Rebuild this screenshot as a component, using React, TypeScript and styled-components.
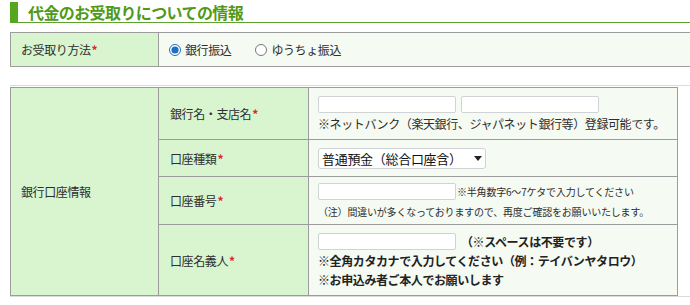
import styled, { createGlobalStyle } from 'styled-components';

const GlobalStyle = createGlobalStyle`
  html, body {
    margin: 0;
    padding: 0;
    background: #fff;
  }
  body {
    font-family: "Noto Sans CJK JP", "Noto Sans", sans-serif;
    color: #333;
  }
`;

const Page = styled.div`
  width: 690px;
  height: 305px;
  overflow: hidden;
  padding: 2px 0 0 10px;
  box-sizing: border-box;
`;

const Heading = styled.h2`
  margin: 0;
  height: 20px;
  border-left: 8px solid #56a61e;
  border-bottom: 1px solid #5ca22c;
  padding-left: 10px;
  display: flex;
  align-items: center;
  font-size: 16px;
  font-weight: bold;
  color: #4f9a18;
  letter-spacing: -0.6px;
  width: 700px;
`;

const Table = styled.table`
  border-collapse: collapse;
  table-layout: fixed;
`;

const MethodTable = styled(Table)`
  margin-top: 9px;
  width: 700px;
`;

const BankWrap = styled.div`
  margin-top: 18px;
  border-top: 1px solid #dcdcdc;
  border-bottom: 1px solid #dcdcdc;
  padding: 1px 0 0;
  width: 700px;
`;

const BankTable = styled(Table)`
  width: 668px;
`;

const Label = styled.td<{ $w?: number; $pl?: number }>`
  width: ${p => p.$w ?? 148}px;
  background: #d8f5cf;
  border: 1px solid #9c9c9c;
  padding: 0 10px 0 ${p => p.$pl ?? 10}px;
  font-size: 12px;
  letter-spacing: -0.4px;
  color: #2e2e2e;
  vertical-align: middle;
  box-sizing: border-box;
`;

const Value = styled.td<{ $h: number }>`
  height: ${p => p.$h}px;
  background: #f5faf2;
  border: 1px solid #9c9c9c;
  padding: 0 9px;
  vertical-align: middle;
  font-size: 12px;
  letter-spacing: -0.4px;
  color: #2e2e2e;
  box-sizing: border-box;
`;

const Req = styled.span`
  color: #e0222e;
  font-size: 12px;
  font-weight: bold;
  margin-left: 1px;
`;

const RadioGroup = styled.div`
  display: flex;
  align-items: center;
  padding-left: 1px;
`;

const RadioLabel = styled.label`
  display: flex;
  align-items: center;
  gap: 4px;
  margin-right: 24px;
`;

const Radio = styled.input`
  margin: 0;
  width: 12px;
  height: 12px;
  accent-color: #1f6fc0;
`;

const Line = styled.div<{ $mt?: number; $gap?: number }>`
  display: flex;
  align-items: center;
  gap: ${p => p.$gap ?? 5}px;
  margin-top: ${p => p.$mt ?? 0}px;
  line-height: 19px;
`;

const TextInput = styled.input`
  width: 138px;
  height: 17px;
  box-sizing: border-box;
  border: 1px solid #cfd3d7;
  border-radius: 2px;
  background: #fff;
  margin: 0;
  padding: 0 3px;
`;

const SelectBox = styled.div`
  position: relative;
  width: 168px;
  height: 21px;
`;

const Select = styled.select`
  appearance: none;
  width: 100%;
  height: 100%;
  border: 1px solid #cfd3d7;
  border-radius: 3px;
  background: #fff;
  font-family: inherit;
  font-size: 13px;
  color: #111;
  padding: 0 3px;
  margin: 0;
  letter-spacing: -0.3px;
`;

const Arrow = styled.span`
  position: absolute;
  right: 4px;
  top: 8px;
  width: 0;
  height: 0;
  border-left: 4px solid transparent;
  border-right: 4px solid transparent;
  border-top: 5px solid #222;
  pointer-events: none;
`;

const Small = styled.span`
  font-size: 10px;
  letter-spacing: -0.2px;
`;

const SmallLine = styled.div`
  font-size: 10px;
  line-height: 16px;
  letter-spacing: -0.2px;
  margin-top: 3px;
`;

const Note = styled.div`
  line-height: 18px;
  margin-top: 2px;
`;

const Strong = styled.span`
  font-weight: bold;
  color: #222;
`;

const StrongLine = styled.div`
  font-weight: bold;
  color: #222;
  line-height: 19px;
`;

const App = () => {
  return (
    <Page>
      <GlobalStyle />
      <Heading>代金のお受取りについての情報</Heading>

      <MethodTable>
        <tbody>
          <tr>
            <Label>お受取り方法<Req>*</Req></Label>
            <Value $h={34}>
              <RadioGroup>
                <RadioLabel>
                  <Radio type="radio" name="method" defaultChecked />
                  銀行振込
                </RadioLabel>
                <RadioLabel>
                  <Radio type="radio" name="method" />
                  ゆうちょ振込
                </RadioLabel>
              </RadioGroup>
            </Value>
          </tr>
        </tbody>
      </MethodTable>

      <BankWrap>
        <BankTable>
          <tbody>
            <tr>
              <Label rowSpan={4}>銀行口座情報</Label>
              <Label $w={150} $pl={11}>銀行名・支店名<Req>*</Req></Label>
              <Value $h={52}>
                <Line $mt={2}>
                  <TextInput />
                  <TextInput />
                </Line>
                <Note>※ネットバンク（楽天銀行、ジャパネット銀行等）登録可能です。</Note>
              </Value>
            </tr>
            <tr>
              <Label $w={150} $pl={11}>口座種類<Req>*</Req></Label>
              <Value $h={37}>
                <SelectBox>
                  <Select defaultValue="futsu">
                    <option value="futsu">普通預金（総合口座含）</option>
                    <option value="toza">当座預金</option>
                  </Select>
                  <Arrow />
                </SelectBox>
              </Value>
            </tr>
            <tr>
              <Label $w={150} $pl={11}>口座番号<Req>*</Req></Label>
              <Value $h={48}>
                <Line $mt={1} $gap={1}>
                  <TextInput />
                  <Small>※半角数字6～7ケタで入力してください</Small>
                </Line>
                <SmallLine>（注）間違いが多くなっておりますので、再度ご確認をお願いいたします。</SmallLine>
              </Value>
            </tr>
            <tr>
              <Label $w={150} $pl={11}>口座名義人<Req>*</Req></Label>
              <Value $h={71}>
                <Line>
                  <TextInput />
                  <Strong>（※スペースは不要です）</Strong>
                </Line>
                <StrongLine>※全角カタカナで入力してください（例：テイバンヤタロウ）</StrongLine>
                <StrongLine>※お申込み者ご本人でお願いします</StrongLine>
              </Value>
            </tr>
          </tbody>
        </BankTable>
      </BankWrap>
    </Page>
  );
};

export default App;
